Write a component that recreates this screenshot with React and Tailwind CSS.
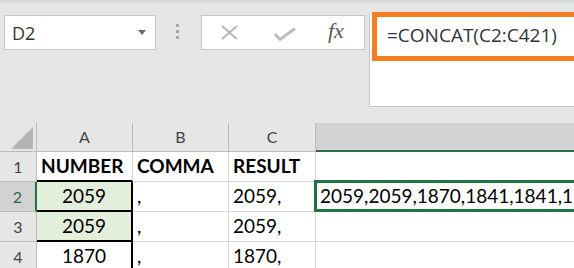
import React from 'react';

const rows = [
  { n: 1, a: 'NUMBER', b: 'COMMA', c: 'RESULT', head: true },
  { n: 2, a: '2059', b: ',', c: '2059,', d: '2059,2059,1870,1841,1841,1', active: true },
  { n: 3, a: '2059', b: ',', c: '2059,' },
  { n: 4, a: '1870', b: ',', c: '1870,' },
];

function FormulaBar() {
  return (
    <div className="h-[123px] flex items-start pl-[4px] pt-[15px] bg-[linear-gradient(#d3d3d3,#e6e6e6_5px)]">
      <div className="w-[152px] h-[35px] shrink-0 bg-white border border-[#c6c6c6] flex items-start justify-between pl-[7px] pr-[9px] pt-[8px]">
        <span className="text-[18px] leading-[18px] text-[#333] font-['Open_Sans',sans-serif]">D2</span>
        <svg width="8" height="5" viewBox="0 0 8 5" className="mt-[6px]">
          <path d="M0 0h8L4 5z" fill="#6b6b6b" />
        </svg>
      </div>
      <div className="w-[45px] shrink-0 flex flex-col items-start gap-[3px] pl-[20px] pt-[9px]">
        <span className="w-[3px] h-[3px] bg-[#a8a8a8]" />
        <span className="w-[3px] h-[3px] bg-[#a8a8a8]" />
        <span className="w-[3px] h-[3px] bg-[#a8a8a8]" />
      </div>
      <div className="w-[164px] h-[35px] shrink-0 bg-white border border-[#c6c6c6] flex items-center pl-[19px]">
        <svg width="17" height="15" viewBox="0 0 17 15" className="mt-[-1px]">
          <path d="M1 1l15 13M16 1L1 14" stroke="#b5b5b5" strokeWidth="1.8" fill="none" />
        </svg>
        <svg width="22" height="14" viewBox="0 0 22 14" className="ml-[36px] mt-[3px]">
          <path d="M1 7l5 5.5L21 1.5" stroke="#bdbdbd" strokeWidth="3" fill="none" />
        </svg>
        <span className="ml-[32px] mt-[-3px] text-[22px] italic text-[#5a5a5a] font-['Liberation_Serif',serif] leading-none">
          fx
        </span>
      </div>
      <div className="flex-1 min-w-0 ml-[4px] mt-[-2px] h-[94px] bg-white border-l border-b border-[#c6c6c6] pl-[17px] pt-[11px]">
        <span className="text-[19px] leading-[18px] text-[#333] font-['Open_Sans',sans-serif] whitespace-nowrap">
          =CONCAT(C2:C421)
        </span>
      </div>
    </div>
  );
}

function HeaderRow() {
  return (
    <div className="flex h-[29px] font-['Lato',sans-serif] text-[16px] text-[#444]">
      <div className="w-[37px] shrink-0 border-r border-b border-[#bcbcbc] flex items-end justify-end pr-[3px] pb-[2px]">
        <svg width="22" height="22" viewBox="0 0 22 22">
          <path d="M0 22H22V0z" fill="#b4b4b4" />
        </svg>
      </div>
      {['A', 'B', 'C'].map((l, i) => (
        <div
          key={l}
          className={`${i === 2 ? 'w-[87px]' : 'w-[96px]'} shrink-0 border-r border-b border-[#bcbcbc] flex items-center justify-center`}
        >
          {l}
        </div>
      ))}
      <div className="flex-1 min-w-0 bg-[#d2d2d2] border-b-2 border-[#217346]" />
    </div>
  );
}

function Row({ r }) {
  const isA = r.n >= 2;
  const green = r.n === 2 || r.n === 3;
  return (
    <div className="flex h-[30px] font-['Lato',sans-serif] text-[19px] text-black">
      <div
        className={`w-[37px] shrink-0 flex items-center justify-center text-[16px] border-b ${
          r.active
            ? 'bg-[#d2d2d2] text-[#1e6b42] border-r-2 border-r-[#217346] border-b-[#bcbcbc]'
            : 'text-[#444] border-r border-[#bcbcbc]'
        }`}
      >
        {r.n}
      </div>
      <div
        className={`w-[96px] shrink-0 flex items-center ${r.head ? 'justify-start pl-[4px] font-bold' : 'justify-center'} ${
          isA ? 'border-b-2 border-r-2 border-black' : 'border-b-2 border-b-black border-r border-r-[#d9d9d9]'
        } ${green ? 'bg-[#e2efda]' : 'bg-white'}`}
      >
        {r.a}
      </div>
      <div
        className={`w-[96px] shrink-0 bg-white border-r border-b border-[#d9d9d9] flex pl-[4px] ${
          r.head ? 'items-center font-bold' : 'items-end pb-[1px]'
        }`}
      >
        {r.b}
      </div>
      <div
        className={`w-[87px] shrink-0 bg-white border-r border-b border-[#d9d9d9] flex items-center pl-[4px] ${r.head ? 'font-bold' : ''}`}
      >
        {r.c}
      </div>
      <div className="flex-1 min-w-0 bg-white border-b border-[#d9d9d9] relative flex items-center pl-[4px] whitespace-nowrap">
        {r.active && (
          <div className="absolute left-[-2px] top-[-2px] bottom-[-1px] right-[-6px] border-[3px] border-[#217346]" />
        )}
        {r.d}
      </div>
    </div>
  );
}

export default function App() {
  return (
    <div className="w-[574px] h-[268px] bg-[#e6e6e6] overflow-hidden relative">
      <FormulaBar />
      <HeaderRow />
      {rows.map((r) => (
        <Row key={r.n} r={r} />
      ))}
      <div className="absolute left-[372px] top-[12px] w-[210px] h-[49px] border-[5px] border-[#f47f20]" />
    </div>
  );
}
